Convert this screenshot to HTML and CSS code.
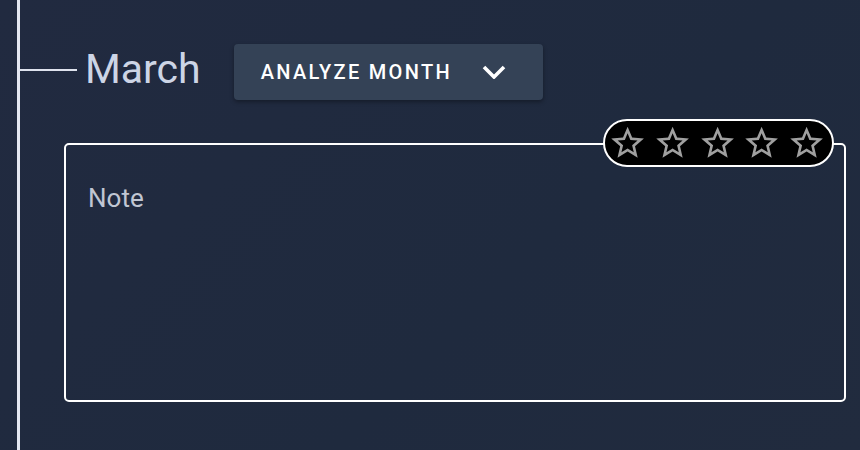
FILE: index.html
```html
<html><head>
	<meta charset="UTF-8">
	<link rel="stylesheet" href="styles.css">
</head>

<body>
	<div class="timeline">
		<div class="month-head">
			<div class="branch"></div>
			<h2 class="month-name">March</h2>
			<button class="analyze-btn">
				<span>ANALYZE MONTH</span>
				<svg class="chevron" viewBox="0 0 24 14"><polyline points="2,2 12,12 22,2"></polyline></svg>
			</button>
		</div>
		<div class="note-wrap">
			<div class="rating">
				<svg class="star" viewBox="0 0 24 24"><path d="M22 9.24l-7.19-.62L12 2 9.19 8.63 2 9.24l5.46 4.73L5.82 21 12 17.27 18.18 21l-1.630-7.03L22 9.24zM12 15.4l-3.76 2.27 1-4.28-3.32-2.88 4.38-.38L12 6.1l1.71 4.04 4.380.38-3.32 2.88 1 4.28L12 15.4z"/></svg>
				<svg class="star" viewBox="0 0 24 24"><path d="M22 9.24l-7.19-.62L12 2 9.19 8.63 2 9.24l5.46 4.73L5.82 21 12 17.27 18.18 21l-1.630-7.03L22 9.24zM12 15.4l-3.76 2.27 1-4.28-3.32-2.88 4.38-.38L12 6.1l1.71 4.04 4.380.38-3.32 2.88 1 4.28L12 15.4z"/></svg>
				<svg class="star" viewBox="0 0 24 24"><path d="M22 9.24l-7.19-.62L12 2 9.19 8.63 2 9.24l5.46 4.73L5.82 21 12 17.27 18.18 21l-1.630-7.03L22 9.24zM12 15.4l-3.76 2.27 1-4.28-3.32-2.88 4.38-.38L12 6.1l1.71 4.04 4.380.38-3.32 2.88 1 4.28L12 15.4z"/></svg>
				<svg class="star" viewBox="0 0 24 24"><path d="M22 9.24l-7.19-.62L12 2 9.19 8.63 2 9.24l5.46 4.73L5.82 21 12 17.27 18.18 21l-1.630-7.03L22 9.24zM12 15.4l-3.76 2.27 1-4.28-3.32-2.88 4.38-.38L12 6.1l1.71 4.04 4.380.38-3.32 2.88 1 4.28L12 15.4z"/></svg>
				<svg class="star" viewBox="0 0 24 24"><path d="M22 9.24l-7.19-.62L12 2 9.19 8.63 2 9.24l5.46 4.73L5.82 21 12 17.27 18.18 21l-1.630-7.03L22 9.24zM12 15.4l-3.76 2.27 1-4.28-3.32-2.88 4.38-.38L12 6.1l1.71 4.04 4.380.38-3.32 2.88 1 4.28L12 15.4z"/></svg>
			</div>
			<div class="note">
				<div class="note-label">Note</div>
			</div>
		</div>
	</div>
</body></html>
```

FILE: styles.css
```css
* {
	box-sizing: border-box;
	font-family: Roboto, 'Liberation Sans', sans-serif;
}
body {
	margin: 0;
	height: 450px;
	overflow: hidden;
	background: linear-gradient(135deg, #212a40 0%, #1f2a3e 60%, #212b3e 100%);
}
.timeline {
	margin-left: 17px;
	height: 450px;
	border-left: 3px solid #e4e7f1;
	padding-top: 44px;
}
.month-head {
	display: flex;
	align-items: center;
	height: 56px;
}
.branch {
	width: 57px;
	height: 2px;
	margin-top: -4px;
	background-color: #dfe3ee;
}
.month-name {
	margin: -6px 0 0 8px;
	font-size: 41px;
	font-weight: 400;
	color: #cdd5e6;
	line-height: 56px;
}
.analyze-btn {
	margin-left: 33px;
	width: 309px;
	height: 56px;
	display: flex;
	align-items: center;
	padding: 0 0 0 27px;
	border: none;
	border-radius: 4px;
	background-color: #344256;
	color: #fff;
	font-size: 20px;
	font-weight: 500;
	letter-spacing: 2.3px;
	box-shadow: 0 2px 4px rgba(0, 0, 0, 0.35);
}
.chevron {
	width: 24px;
	height: 14px;
	margin-left: 30px;
	fill: none;
	stroke: #fff;
	stroke-width: 3.6;
}
.note-wrap {
	position: relative;
	margin: 43px 0 0 44px;
	width: 782px;
}
.note {
	height: 259px;
	border: 2px solid #fff;
	border-radius: 5px;
	padding: 38px 0 0 22px;
}
.note-label {
	font-size: 26px;
	color: #c0c6d3;
}
.rating {
	position: absolute;
	top: -24px;
	right: 12px;
	width: 231px;
	height: 48px;
	display: flex;
	align-items: center;
	padding-left: 3px;
	background-color: #000;
	border: 2px solid #fff;
	border-radius: 24px;
}
.star {
	width: 40px;
	height: 40px;
	margin-right: 5.6px;
	fill: #a0a0a0;
}
```
